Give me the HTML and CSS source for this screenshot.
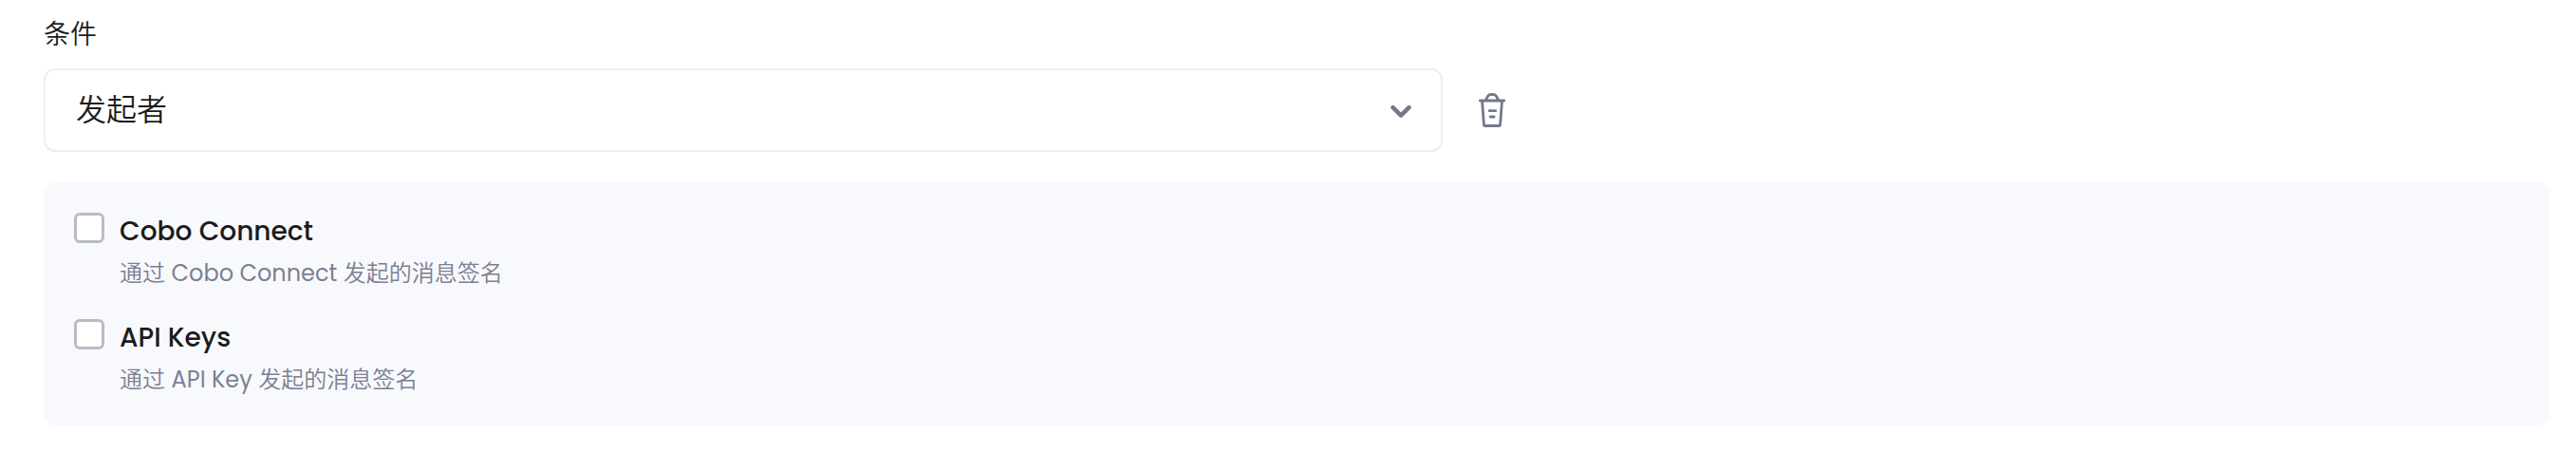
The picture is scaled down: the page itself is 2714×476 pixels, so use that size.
FILE: index.html
```html
<!DOCTYPE html>
<html lang="zh-CN">
<head>
<meta charset="utf-8">
<title>条件</title>
<link rel="stylesheet" href="styles.css">
</head>
<body>
<main class="form">
  <div class="label">条件</div>
  <div class="row">
    <div class="select">
      <span class="value">发起者</span>
      <svg class="chevron" width="32" height="32" viewBox="0 0 32 32"><path d="M7.5 13.2l8.5 8.4 8.5-8.4"/></svg>
    </div>
    <svg class="trash" width="32" height="40" viewBox="0 0 32 40">
      <path d="M3.3 10H28.7M5.5 10L7.4 35.2a1.4 1.4 0 0 0 1.4 1.3h14.4a1.4 1.4 0 0 0 1.4-1.3L26.5 10M9.3 9.5L11.6 5.2a3.4 3.4 0 0 1 2.8-1.7h3.2a3.4 3.4 0 0 1 2.8 1.7L22.7 9.5M13.1 20.7h6.6M14.1 27h4"/>
    </svg>
  </div>
  <section class="panel">
    <div class="option">
      <span class="box"></span>
      <div class="text">
        <div class="title">Cobo Connect</div>
        <div class="desc">通过 <span class="latin">Cobo Connect</span> 发起的消息签名</div>
      </div>
    </div>
    <div class="option">
      <span class="box"></span>
      <div class="text">
        <div class="title">API Keys</div>
        <div class="desc">通过 <span class="latin">API Key</span> 发起的消息签名</div>
      </div>
    </div>
  </section>
</main>
</body>
</html>
```
FILE: styles.css
```css
* { box-sizing: border-box; }
body {
  margin: 0;
  background: #fff;
  color: #1c1c1c;
  font-family: Poppins, Inter, "Noto Sans CJK SC", sans-serif;
}
.form { padding: 16px 28px 28px 46px; }
.label { height: 42px; margin-bottom: 14px; font-size: 28px; line-height: 42px; font-weight: 350; }
.row { display: flex; align-items: center; gap: 36px; }
.select {
  width: 1474px;
  height: 88px;
  padding: 0 26px 0 32px;
  border: 2px solid #ededf3;
  border-radius: 12px;
  display: flex;
  align-items: center;
  justify-content: space-between;
}
.value { font-size: 32px; line-height: 48px; font-weight: 350; }
.chevron, .trash { fill: none; stroke: #73798b; stroke-linecap: round; stroke-linejoin: round; }
.chevron { stroke-width: 4.6; }
.trash { stroke-width: 2.8; }
.panel {
  height: 256px;
  margin-top: 32px;
  padding: 32px;
  border-radius: 12px;
  background: #f8f9fd;
}
.option { height: 112px; display: flex; gap: 16px; }
.box { width: 32px; height: 32px; border: 3px solid #b9bbc6; border-radius: 6px; background: #fff; }
.title { height: 42px; font-size: 28px; line-height: 40px; font-weight: 500; white-space: nowrap; }
.desc { font-size: 24px; line-height: 44px; font-weight: 350; color: #7c8091; white-space: nowrap; }
.latin { font-weight: 400; }
```
